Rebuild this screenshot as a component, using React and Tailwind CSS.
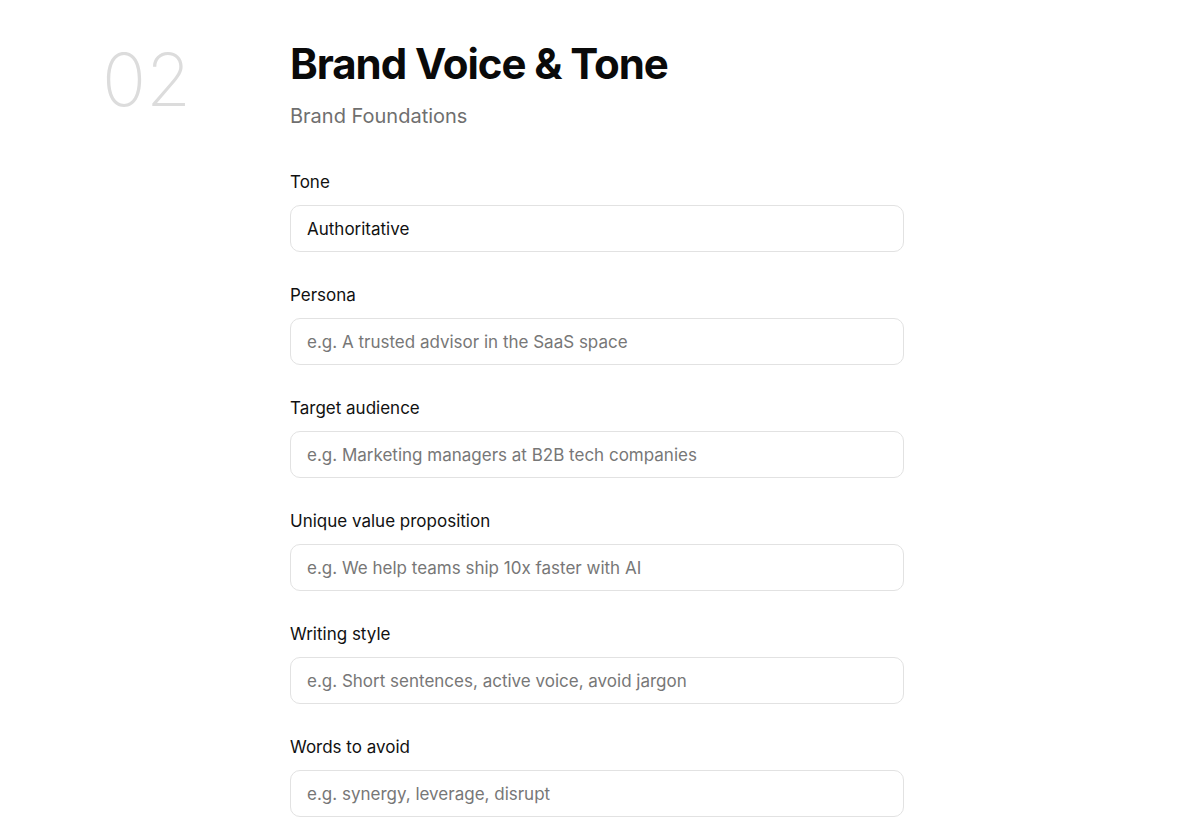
const fields = [
  { label: "Tone", value: "Authoritative", placeholder: "" },
  { label: "Persona", value: "", placeholder: "e.g. A trusted advisor in the SaaS space" },
  { label: "Target audience", value: "", placeholder: "e.g. Marketing managers at B2B tech companies" },
  { label: "Unique value proposition", value: "", placeholder: "e.g. We help teams ship 10x faster with AI" },
  { label: "Writing style", value: "", placeholder: "e.g. Short sentences, active voice, avoid jargon" },
  { label: "Words to avoid", value: "", placeholder: "e.g. synergy, leverage, disrupt" },
];

function Field({ label, value, placeholder }) {
  return (
    <div className="flex flex-col">
      <label className="mb-[11px] text-[17px] leading-6 text-[#111]">{label}</label>
      <input
        defaultValue={value}
        placeholder={placeholder}
        className="h-[47px] w-full rounded-[10px] border border-[#e2e2e2] bg-white px-4 text-[17px] text-[#111] outline-none placeholder:text-[#777]"
      />
    </div>
  );
}

export default function App() {
  return (
    <div className="min-h-screen bg-white font-['Inter','Liberation_Sans',sans-serif]">
      <div className="flex pt-[43px]">
        <div className="w-[290px] shrink-0 pl-[102px]">
          <span className="block text-[73px] font-extralight leading-none text-[#dcdcdc]">
            02
          </span>
        </div>
        <div className="w-[614px]">
          <h1 className="text-[42px] font-bold leading-none tracking-[-0.025em] text-[#0a0a0a]">
            Brand Voice &amp; Tone
          </h1>
          <p className="mt-[17px] text-[20px] leading-7 text-[#6f6f6f]">Brand Foundations</p>
          <div className="mt-[40px] flex flex-col gap-[31px]">
            {fields.map((f) => (
              <Field key={f.label} {...f} />
            ))}
          </div>
        </div>
      </div>
    </div>
  );
}
